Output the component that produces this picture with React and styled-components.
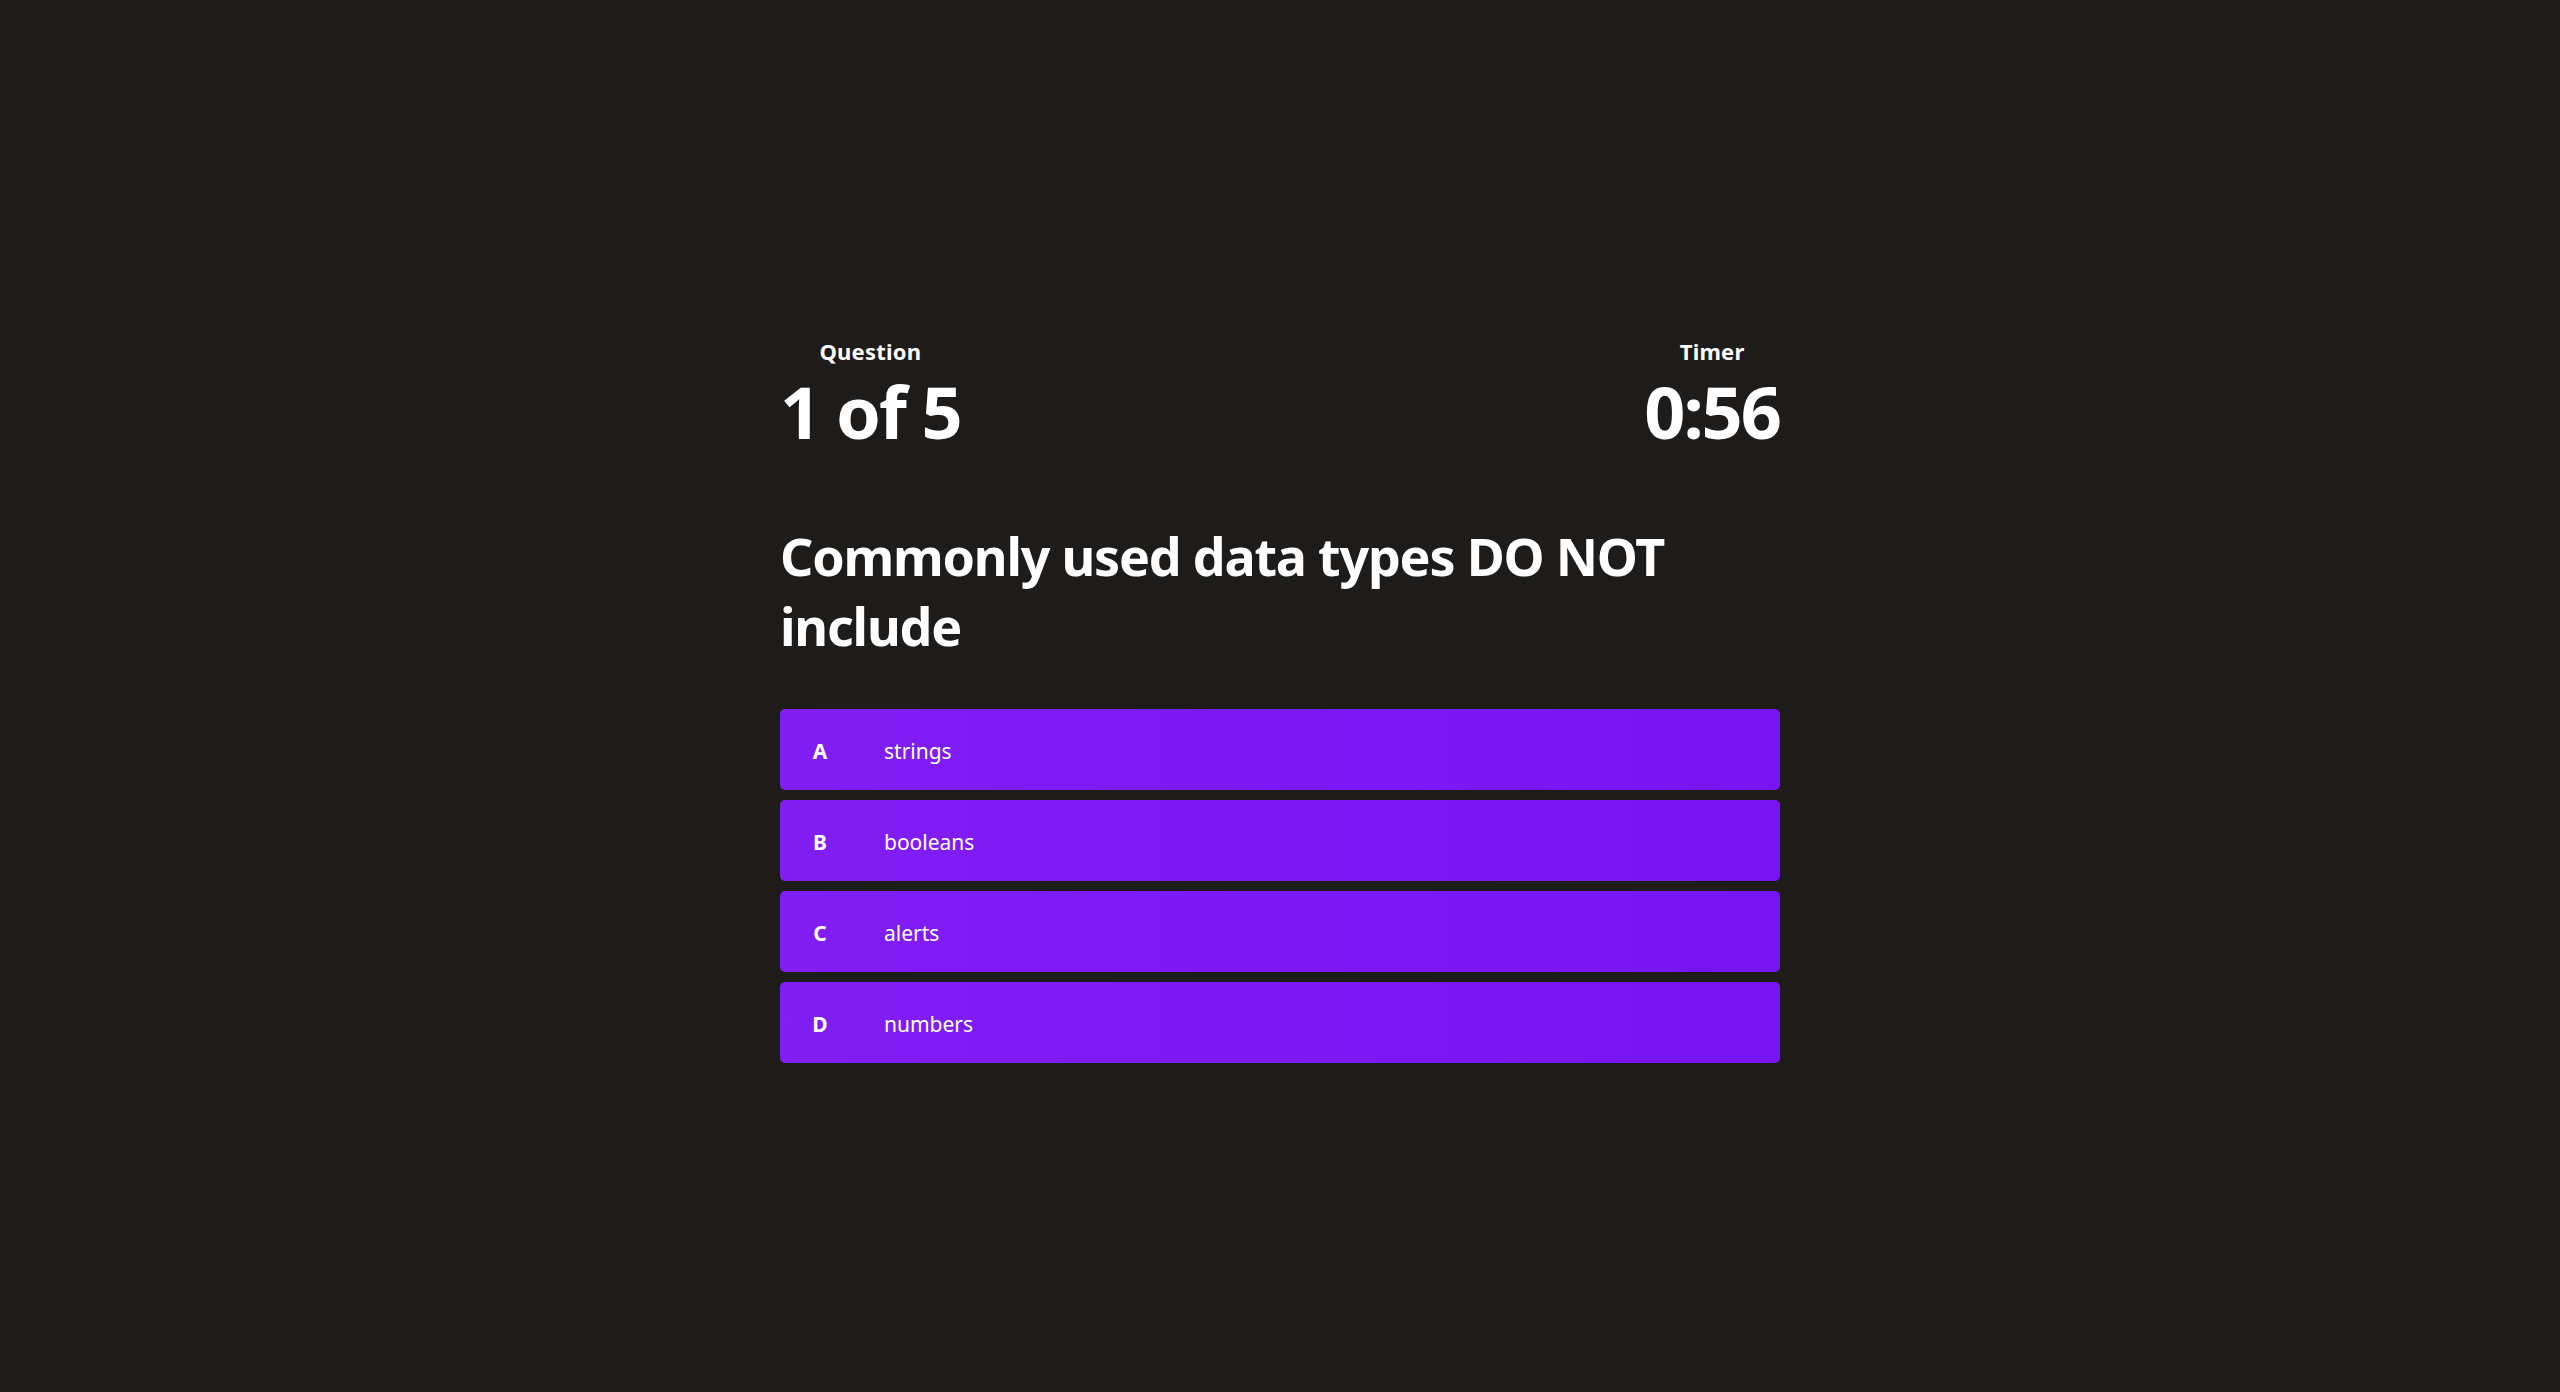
import React from "react";
import styled, { createGlobalStyle } from "styled-components";

const Global = createGlobalStyle`
  html, body { margin: 0; padding: 0; background: #1d1c1b; }
  body { font-family: "Noto Sans", "Open Sans", sans-serif; color: #ffffff; }
`;

const Page = styled.main`
  min-height: 1392px;
  display: flex;
  justify-content: center;
  padding-top: 339px;
  box-sizing: border-box;
`;

const Quiz = styled.section`
  width: 1000px;
  display: flex;
  flex-direction: column;
`;

const Header = styled.header`
  display: flex;
  justify-content: space-between;
  align-items: flex-start;
`;

const Stat = styled.div`
  display: flex;
  flex-direction: column;
  align-items: center;
  gap: 8px;
`;

const StatLabel = styled.span`
  font-size: 22px;
  line-height: 24px;
  font-weight: 700;
  letter-spacing: 0.2px;
`;

const StatValue = styled.span`
  font-size: 72px;
  line-height: 80px;
  font-weight: 700;
  letter-spacing: -2px;
`;

const Question = styled.h1`
  margin: 70px 0 48px;
  font-size: 52px;
  line-height: 70px;
  font-weight: 700;
  letter-spacing: -1.2px;
`;

const Options = styled.ol`
  list-style: none;
  margin: 0;
  padding: 0;
  display: flex;
  flex-direction: column;
  gap: 10px;
`;

const Option = styled.li`
  height: 81px;
  border-radius: 5px;
  background: linear-gradient(to right, #811ef4, #7714f3);
  display: flex;
  align-items: center;
  padding-top: 3px;
  box-sizing: border-box;
  cursor: pointer;
`;

const Letter = styled.span`
  width: 80px;
  text-align: center;
  font-size: 21px;
  line-height: 21px;
  font-weight: 700;
`;

const Answer = styled.span`
  margin-left: 24px;
  font-size: 21px;
  line-height: 21px;
  font-weight: 400;
`;

const answers = [
  ["A", "strings"],
  ["B", "booleans"],
  ["C", "alerts"],
  ["D", "numbers"],
];

export default function App() {
  return (
    <>
      <Global />
      <Page>
        <Quiz>
          <Header>
            <Stat>
              <StatLabel>Question</StatLabel>
              <StatValue>1 of 5</StatValue>
            </Stat>
            <Stat>
              <StatLabel>Timer</StatLabel>
              <StatValue>0:56</StatValue>
            </Stat>
          </Header>
          <Question>Commonly used data types DO NOT include</Question>
          <Options>
            {answers.map(([l, t]) => (
              <Option key={l}>
                <Letter>{l}</Letter>
                <Answer>{t}</Answer>
              </Option>
            ))}
          </Options>
        </Quiz>
      </Page>
    </>
  );
}
